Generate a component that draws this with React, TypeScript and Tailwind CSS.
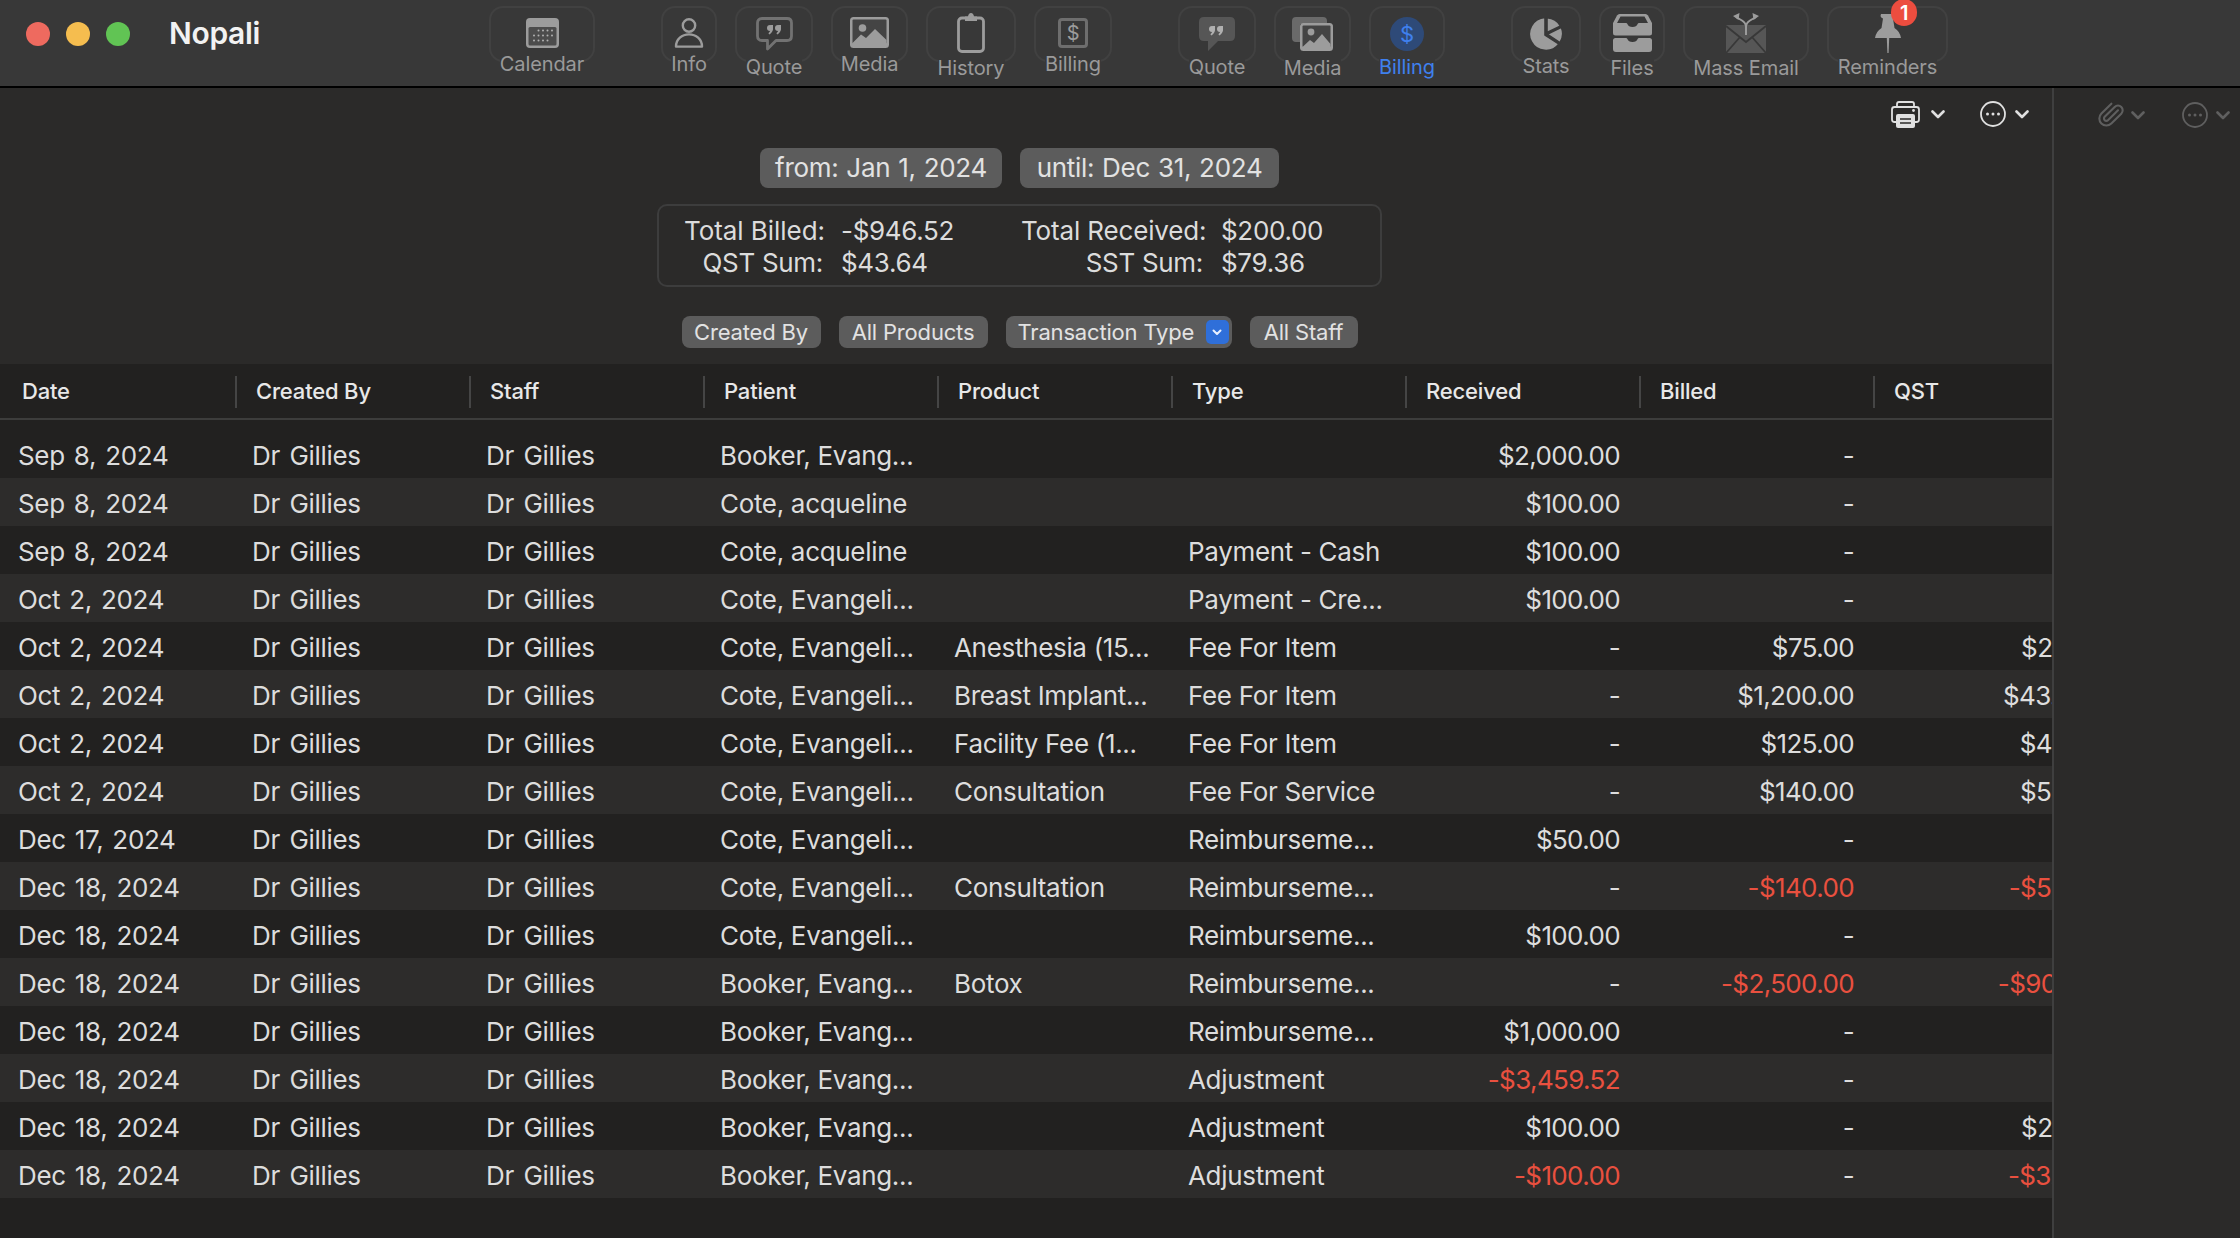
import { Paperclip } from 'lucide-react';

const ICON = '#9c9c9c';
const BAR_BG = '#383838';

const QuoteMarks = ({ x, y, color }: { x: number; y: number; color: string }) => (
  <g fill={color}>
    <circle cx={x + 3} cy={y + 3} r={3} />
    <path d={`M${x + 3.4} ${y} h2.6 v3.4 q0 3.6 -3.6 6 l-1 -1.2 q2 -1.6 2 -3.6 z`} />
    <circle cx={x + 11} cy={y + 3} r={3} />
    <path d={`M${x + 11.4} ${y} h2.6 v3.4 q0 3.6 -3.6 6 l-1 -1.2 q2 -1.6 2 -3.6 z`} />
  </g>
);

const CalendarIcon = () => (
  <svg width="33" height="30" viewBox="0 0 33 30" className="mt-[10px]">
    <rect width="33" height="30" rx="4" fill={ICON} />
    <rect x="2.5" y="9" width="28" height="18.5" rx="1.5" fill="#4c4c4c" />
    {[12.5, 17.5, 22.5].map((cy) =>
      [8, 12.5, 17, 21.5, 26].map((cx) =>
        (cy === 12.5 && cx === 8) || (cy === 22.5 && cx === 26) ? null : (
          <circle key={`${cx}-${cy}`} cx={cx} cy={cy} r="1" fill="#b0b0b0" />
        ),
      ),
    )}
  </svg>
);

const InfoIcon = () => (
  <svg width="30" height="30" viewBox="0 0 30 30" fill="none" stroke={ICON} strokeWidth="2.4" className="mt-[10px]">
    <circle cx="15" cy="7.5" r="6.2" />
    <path d="M2 28.6 C2 21 8 16.4 15 16.4 C22 16.4 28 21 28 28.6 Z" strokeLinejoin="round" />
  </svg>
);

const QuoteOutlineIcon = () => (
  <svg width="37" height="35" viewBox="0 0 37 35" className="mt-[9px]">
    <path
      d="M6 1.5 H31 Q35.5 1.5 35.5 6 V19 Q35.5 23.5 31 23.5 H20 L11.5 32 V23.5 H6 Q1.5 23.5 1.5 19 V6 Q1.5 1.5 6 1.5 Z"
      fill="none"
      stroke="#727272"
      strokeWidth="2.8"
      strokeLinejoin="round"
    />
    <QuoteMarks x={11} y={8} color={ICON} />
  </svg>
);

const QuoteFilledIcon = () => (
  <svg width="36" height="35" viewBox="0 0 36 35" className="mt-[9px]">
    <path d="M5 0 H31 Q36 0 36 5 V19 Q36 24 31 24 H19 L9 34 V24 H5 Q0 24 0 19 V5 Q0 0 5 0 Z" fill="#565656" />
    <QuoteMarks x={10} y={9} color="#b0b0b0" />
  </svg>
);

const MediaIcon = () => (
  <svg width="39" height="31" viewBox="0 0 39 31" className="mt-[9px]">
    <rect width="39" height="31" rx="3.5" fill={ICON} />
    <rect x="2.5" y="2.5" width="34" height="24" rx="1" fill="#444" />
    <circle cx="12.5" cy="11" r="3.8" fill={ICON} />
    <path d="M2.5 26 L11 17.5 L16 21 L25 12 L36.5 23 V27 H2.5 Z" fill={ICON} />
  </svg>
);

const HistoryIcon = () => (
  <svg width="28" height="40" viewBox="0 0 28 40" className="mt-[5px]">
    <rect x="1.5" y="5" width="25" height="33.5" rx="3.5" fill="none" stroke={ICON} strokeWidth="2.8" />
    <path d="M8 3.5 H11 Q11.5 0 14 0 Q16.5 0 17 3.5 H20 V8 H8 Z" fill={ICON} />
  </svg>
);

const BillingIcon = () => (
  <div className="mt-[10px] flex h-[30px] w-[30px] items-center justify-center rounded-[4px] border-[3px] border-[#6e6e6e] text-[20px] leading-none text-[#9c9c9c]">
    $
  </div>
);

const MediaStackIcon = () => (
  <svg width="41" height="34" viewBox="0 0 41 34" className="mt-[9px]">
    <path d="M0 4 Q0 0 4 0 H31 Q35 0 35 4 V7 H8 V25 H4 Q0 25 0 21 Z" fill="#6a6a6a" />
    <rect x="8" y="6" width="33" height="28" rx="3.5" fill={ICON} />
    <rect x="10.5" y="8.5" width="28" height="21.5" rx="1" fill="#444" />
    <circle cx="19" cy="15" r="3.4" fill={ICON} />
    <path d="M10.5 30 L18 23 L22 26 L30 17 L38.5 27 V31 H10.5 Z" fill={ICON} />
  </svg>
);

const BillingActiveIcon = () => (
  <div className="mt-[9px] flex h-[34px] w-[34px] items-center justify-center rounded-full bg-[#2e4a78] text-[22px] leading-none text-[#3f80ee]">
    $
  </div>
);

const StatsIcon = () => (
  <svg width="34" height="34" viewBox="0 0 34 34" className="mt-[9px]">
    <g fill={ICON} stroke={BAR_BG} strokeWidth="1.6" strokeLinejoin="round">
      <path d="M16 18 L16 0.5 A16.5 16.5 0 1 0 30 27 Z" />
      <path d="M18 15.5 L18 0.6 A16.5 16.5 0 0 1 31.6 9 Z" />
      <path d="M18.2 17.2 L32.4 10.4 A16.5 16.5 0 0 1 31 25.6 Z" />
    </g>
  </svg>
);

const FilesIcon = () => (
  <svg width="39" height="38" viewBox="0 0 39 38" className="mt-[6px]">
    <path d="M6.5 0 H32.5 Q34 0 35 1.6 L39 9 V19 Q39 21.5 36.5 21.5 H2.5 Q0 21.5 0 19 V9 L4 1.6 Q5 0 6.5 0 Z" fill={ICON} />
    <path d="M7.5 2.6 H31.5 L35 9 H26 Q25 9 24.6 10 Q23.6 13 19.5 13 Q15.4 13 14.4 10 Q14 9 13 9 H4 Z" fill={BAR_BG} />
    <path d="M2.5 24 H13 Q14 24 14.4 25 Q15.4 28 19.5 28 Q23.6 28 24.6 25 Q25 24 26 24 H36.5 Q39 24 39 26.5 V35 Q39 38 36 38 H3 Q0 38 0 35 V26.5 Q0 24 2.5 24 Z" fill={ICON} />
  </svg>
);

const MassEmailIcon = () => (
  <svg width="40" height="40" viewBox="0 0 40 40" className="mt-[5px]">
    <rect y="12" width="40" height="28" rx="1" fill="#565656" />
    <path d="M0 13 L20 29 L40 13 M0 40 L14 24 M40 40 L26 24" fill="none" stroke={BAR_BG} strokeWidth="1.8" />
    <path d="M20 22 V14 Q20 10 16 7.5 L10 4 M20 14 Q20 10 24 7.5 L30 4" fill="none" stroke={ICON} strokeWidth="2" />
    <path d="M7 3 L13.5 0 L12.5 7 Z M33 3 L26.5 0 L27.5 7 Z" fill={ICON} />
  </svg>
);

const PinIcon = () => (
  <svg width="26" height="39" viewBox="0 0 26 39" className="mt-[6px]">
    <path d="M6 0 H20 Q21.5 3 18 4.5 L19.5 14 Q25 17.5 26 24 H0 Q1 17.5 6.5 14 L8 4.5 Q4.5 3 6 0 Z" fill={ICON} />
    <path d="M11.8 24 H14.2 L13.6 39 H12.4 Z" fill={ICON} />
  </svg>
);

const Chevron = ({ color }: { color: string }) => (
  <svg width="14" height="9" viewBox="0 0 14 9" fill="none" stroke={color} strokeWidth="2.6" strokeLinecap="round" strokeLinejoin="round">
    <path d="M1.5 1.5 L7 7 L12.5 1.5" />
  </svg>
);

const DotsCircle = ({ color }: { color: string }) => (
  <svg width="26" height="26" viewBox="0 0 26 26" fill="none">
    <circle cx="13" cy="13" r="12" stroke={color} strokeWidth="1.8" />
    <circle cx="7.5" cy="13" r="1.5" fill={color} />
    <circle cx="13" cy="13" r="1.5" fill={color} />
    <circle cx="18.5" cy="13" r="1.5" fill={color} />
  </svg>
);

const PrinterIcon = () => (
  <svg width="29" height="27" viewBox="0 0 29 27" fill="none">
    <path d="M6 6 V3 Q6 1 8 1 H21 Q23 1 23 3 V6" stroke="#e0e0e0" strokeWidth="1.8" />
    <path d="M5 21 H3.5 Q1 21 1 18.5 V8.5 Q1 6 3.5 6 H25.5 Q28 6 28 8.5 V18.5 Q28 21 25.5 21 H24" stroke="#e0e0e0" strokeWidth="1.8" />
    <circle cx="22.5" cy="9.5" r="1.4" fill="#e0e0e0" />
    <rect x="5" y="13" width="19" height="14" rx="2" fill="#e0e0e0" />
    <path d="M9 18 H20 M9 22 H20" stroke="#2b2a29" strokeWidth="1.6" />
  </svg>
);

const GREY_LABEL = 'text-[#9a9a9a]';

const toolGroups = [
  [{ label: 'Calendar', icon: <CalendarIcon />, box: 'w-[106px]', text: `-mt-[10px] ${GREY_LABEL}` }],
  [
    { label: 'Info', icon: <InfoIcon />, box: 'w-[56px]', text: `-mt-[10px] ${GREY_LABEL}` },
    { label: 'Quote', icon: <QuoteOutlineIcon />, box: 'w-[78px]', text: `-mt-[7px] ${GREY_LABEL}` },
    { label: 'Media', icon: <MediaIcon />, box: 'w-[77px]', text: `-mt-[10px] ${GREY_LABEL}` },
    { label: 'History', icon: <HistoryIcon />, box: 'w-[90px]', text: `-mt-[6px] ${GREY_LABEL}` },
    { label: 'Billing', icon: <BillingIcon />, box: 'w-[78px]', text: `-mt-[10px] ${GREY_LABEL}` },
  ],
  [
    { label: 'Quote', icon: <QuoteFilledIcon />, box: 'w-[78px]', text: `-mt-[7px] ${GREY_LABEL}` },
    { label: 'Media', icon: <MediaStackIcon />, box: 'w-[77px]', text: `-mt-[6px] ${GREY_LABEL}` },
    { label: 'Billing', icon: <BillingActiveIcon />, box: 'w-[76px]', text: '-mt-[7px] text-[#3f80ee]' },
  ],
  [
    { label: 'Stats', icon: <StatsIcon />, box: 'w-[70px]', text: `-mt-[8px] ${GREY_LABEL}` },
    { label: 'Files', icon: <FilesIcon />, box: 'w-[66px]', text: `-mt-[6px] ${GREY_LABEL}` },
    { label: 'Mass Email', icon: <MassEmailIcon />, box: 'w-[126px]', text: `-mt-[6px] ${GREY_LABEL}` },
    {
      label: 'Reminders',
      icon: <PinIcon />,
      box: 'w-[121px]',
      text: `-mt-[7px] ${GREY_LABEL}`,
      badge: '1',
    },
  ],
];

const columns = ['Date', 'Created By', 'Staff', 'Patient', 'Product', 'Type', 'Received', 'Billed', 'QST'];

const DG = 'Dr Gillies';
const rows = [
  ['Sep 8, 2024', 'Booker, Evang...', '', '', '$2,000.00', '-', ''],
  ['Sep 8, 2024', 'Cote, acqueline', '', '', '$100.00', '-', ''],
  ['Sep 8, 2024', 'Cote, acqueline', '', 'Payment - Cash', '$100.00', '-', ''],
  ['Oct 2, 2024', 'Cote, Evangeli...', '', 'Payment - Cre...', '$100.00', '-', ''],
  ['Oct 2, 2024', 'Cote, Evangeli...', 'Anesthesia (15...', 'Fee For Item', '-', '$75.00', '$2.73'],
  ['Oct 2, 2024', 'Cote, Evangeli...', 'Breast Implant...', 'Fee For Item', '-', '$1,200.00', '$43.64'],
  ['Oct 2, 2024', 'Cote, Evangeli...', 'Facility Fee (1...', 'Fee For Item', '-', '$125.00', '$4.55'],
  ['Oct 2, 2024', 'Cote, Evangeli...', 'Consultation', 'Fee For Service', '-', '$140.00', '$5.09'],
  ['Dec 17, 2024', 'Cote, Evangeli...', '', 'Reimburseme...', '$50.00', '-', ''],
  ['Dec 18, 2024', 'Cote, Evangeli...', 'Consultation', 'Reimburseme...', '-', '-$140.00', '-$5.09'],
  ['Dec 18, 2024', 'Cote, Evangeli...', '', 'Reimburseme...', '$100.00', '-', ''],
  ['Dec 18, 2024', 'Booker, Evang...', 'Botox', 'Reimburseme...', '-', '-$2,500.00', '-$90.91'],
  ['Dec 18, 2024', 'Booker, Evang...', '', 'Reimburseme...', '$1,000.00', '-', ''],
  ['Dec 18, 2024', 'Booker, Evang...', '', 'Adjustment', '-$3,459.52', '-', ''],
  ['Dec 18, 2024', 'Booker, Evang...', '', 'Adjustment', '$100.00', '-', '$2.73'],
  ['Dec 18, 2024', 'Booker, Evang...', '', 'Adjustment', '-$100.00', '-', '-$3.64'],
];

const Amount = ({ value }: { value: string }) => (
  <div className={`whitespace-nowrap pr-[18px] text-right tracking-[-0.024em] ${value.startsWith('-$') ? 'text-[#e9503f]' : ''}`}>{value}</div>
);

const Pill = ({ className, children }: { className: string; children: React.ReactNode }) => (
  <div className={`flex items-center rounded-[8px] bg-[#5c5c5c] text-[#e2e2e2] ${className}`}>{children}</div>
);

export default function App() {
  return (
    <div className="flex h-[1238px] w-full flex-col overflow-hidden bg-[#2b2a29] [font-family:Inter,sans-serif] tracking-[-0.02em]">
      {/* Title bar */}
      <header className="flex h-[88px] shrink-0 items-start overflow-hidden border-b-2 border-black bg-[#383838] pt-[6px]">
        <div className="ml-[26px] mt-[16px] flex gap-4">
          <div className="h-6 w-6 rounded-full bg-[#ee6a5f]" />
          <div className="h-6 w-6 rounded-full bg-[#f5bd4f]" />
          <div className="h-6 w-6 rounded-full bg-[#61c454]" />
        </div>
        <div className="ml-[39px] mt-[9px] w-[320px] text-[30px] font-semibold leading-[36px] text-[#f2f2f2]">Nopali</div>
        <div className="flex gap-[66px]">
          {toolGroups.map((group, i) => (
            <div key={i} className="flex gap-[18px]">
              {group.map((tool) => (
                <div key={tool.label + i} className={`flex flex-col items-center ${tool.box}`}>
                  <div className="relative flex h-[56px] w-full justify-center rounded-[14px] border-2 border-[#414141]">
                    {tool.icon}
                    {'badge' in tool && (
                      <div className="absolute left-[62px] -top-[9px] flex h-[27px] w-[26px] items-center justify-center rounded-full bg-[#ec4d3f] text-[20px] font-semibold text-white">
                        {tool.badge}
                      </div>
                    )}
                  </div>
                  <div className={`relative whitespace-nowrap bg-[#383838] text-[20px] leading-[24px] tracking-[-0.005em] ${tool.text}`}>{tool.label}</div>
                </div>
              ))}
            </div>
          ))}
        </div>
      </header>

      <div className="flex min-h-0 flex-1">
        {/* Main column */}
        <main className="flex w-[2054px] shrink-0 flex-col border-r-2 border-[#3f3f3f]">
          <div className="flex h-[60px] shrink-0 items-center justify-end gap-[35px] pb-[8px] pr-[23px]">
            <div className="flex items-center gap-[11px]">
              <PrinterIcon />
              <Chevron color="#e0e0e0" />
            </div>
            <div className="flex items-center gap-[9px]">
              <DotsCircle color="#e0e0e0" />
              <Chevron color="#e0e0e0" />
            </div>
          </div>

          <div className="flex shrink-0 flex-col items-center pr-[13px]">
            <div className="flex gap-[18px] text-[26px] tracking-[-0.012em] [word-spacing:1px]">
              <Pill className="h-[40px] w-[242px] justify-center pb-[2px]">from: Jan 1, 2024</Pill>
              <Pill className="h-[40px] w-[259px] justify-center pb-[2px]">until: Dec 31, 2024</Pill>
            </div>

            <div className="mt-[16px] grid h-[83px] w-[725px] grid-cols-[139px_162px_182px_1fr] content-start gap-x-[18px] rounded-[10px] border-2 border-[#3d3d3d] pl-[25px] pt-[9px] text-[26px] leading-[32px] tracking-[-0.012em] text-[#dcdcdc]">
              <div className="whitespace-nowrap text-right tracking-[-0.002em]">Total Billed:</div>
              <div>-$946.52</div>
              <div className="whitespace-nowrap text-right tracking-[-0.006em]">Total Received:</div>
              <div>$200.00</div>
              <div className="whitespace-nowrap text-right">QST Sum:</div>
              <div>$43.64</div>
              <div className="whitespace-nowrap text-right">SST Sum:</div>
              <div>$79.36</div>
            </div>

            <div className="mt-[29px] flex gap-[18px] text-[22px] tracking-[-0.008em]">
              <Pill className="h-[32px] w-[139px] justify-center rounded-[6px]">Created By</Pill>
              <Pill className="h-[32px] w-[149px] justify-center rounded-[6px]">All Products</Pill>
              <Pill className="h-[32px] w-[226px] justify-between rounded-[6px] pl-[12px] pr-[3px]">
                <span className="whitespace-nowrap">Transaction Type</span>
                <span className="flex h-[24px] w-[23px] items-center justify-center rounded-[5px] bg-[#2f6fd9]">
                  <svg width="10" height="7" viewBox="0 0 10 7" fill="none" stroke="#e8f0ff" strokeWidth="2" strokeLinecap="round" strokeLinejoin="round">
                    <path d="M1.5 1.5 L5 5 L8.5 1.5" />
                  </svg>
                </span>
              </Pill>
              <Pill className="h-[32px] w-[108px] justify-center rounded-[6px]">All Staff</Pill>
            </div>
          </div>

          {/* Table */}
          <div className="mt-[16px] flex min-h-0 flex-1 flex-col overflow-hidden bg-[#222120]">
            <div className="grid h-[56px] shrink-0 grid-cols-[repeat(9,234px)] items-center border-b-2 border-[#3d3d3c] pl-px pt-px text-[22px] font-medium tracking-[-0.008em] text-[#e8e8e8]">
              {columns.map((col, i) => (
                <div key={col} className={`flex h-[32px] items-center ${i > 0 ? 'border-l-2 border-[#454545] pl-[19px]' : 'pl-[21px]'}`}>
                  {col}
                </div>
              ))}
            </div>
            <div className="pt-[10px] text-[26px] text-[#dddddd]">
              {rows.map((row, i) => (
                <div
                  key={i}
                  className={`grid h-[48px] grid-cols-[repeat(9,234px)] items-center pt-[2px] ${i % 2 === 1 ? 'bg-[#2d2c2b]' : ''}`}
                >
                  <div className="pl-[18px] [word-spacing:2px]">{row[0]}</div>
                  <div className="pl-[18px] [word-spacing:2.5px]">{DG}</div>
                  <div className="pl-[18px] [word-spacing:2.5px]">{DG}</div>
                  <div className="whitespace-nowrap pl-[18px]">{row[1]}</div>
                  <div className="whitespace-nowrap pl-[18px]">{row[2]}</div>
                  <div className="whitespace-nowrap pl-[18px]">{row[3]}</div>
                  <Amount value={row[4]} />
                  <Amount value={row[5]} />
                  <Amount value={row[6]} />
                </div>
              ))}
            </div>
          </div>
        </main>

        {/* Side panel */}
        <aside className="flex h-[60px] flex-1 items-center justify-end gap-[37px] pb-[6px] pr-[10px]">
          <div className="flex items-center gap-[6px]">
            <Paperclip size={28} color="#5f5f5f" strokeWidth={1.8} className="-scale-x-100 rotate-[90deg]" />
            <Chevron color="#5f5f5f" />
          </div>
          <div className="flex items-center gap-[8px]">
            <DotsCircle color="#5f5f5f" />
            <Chevron color="#5f5f5f" />
          </div>
        </aside>
      </div>
    </div>
  );
}
